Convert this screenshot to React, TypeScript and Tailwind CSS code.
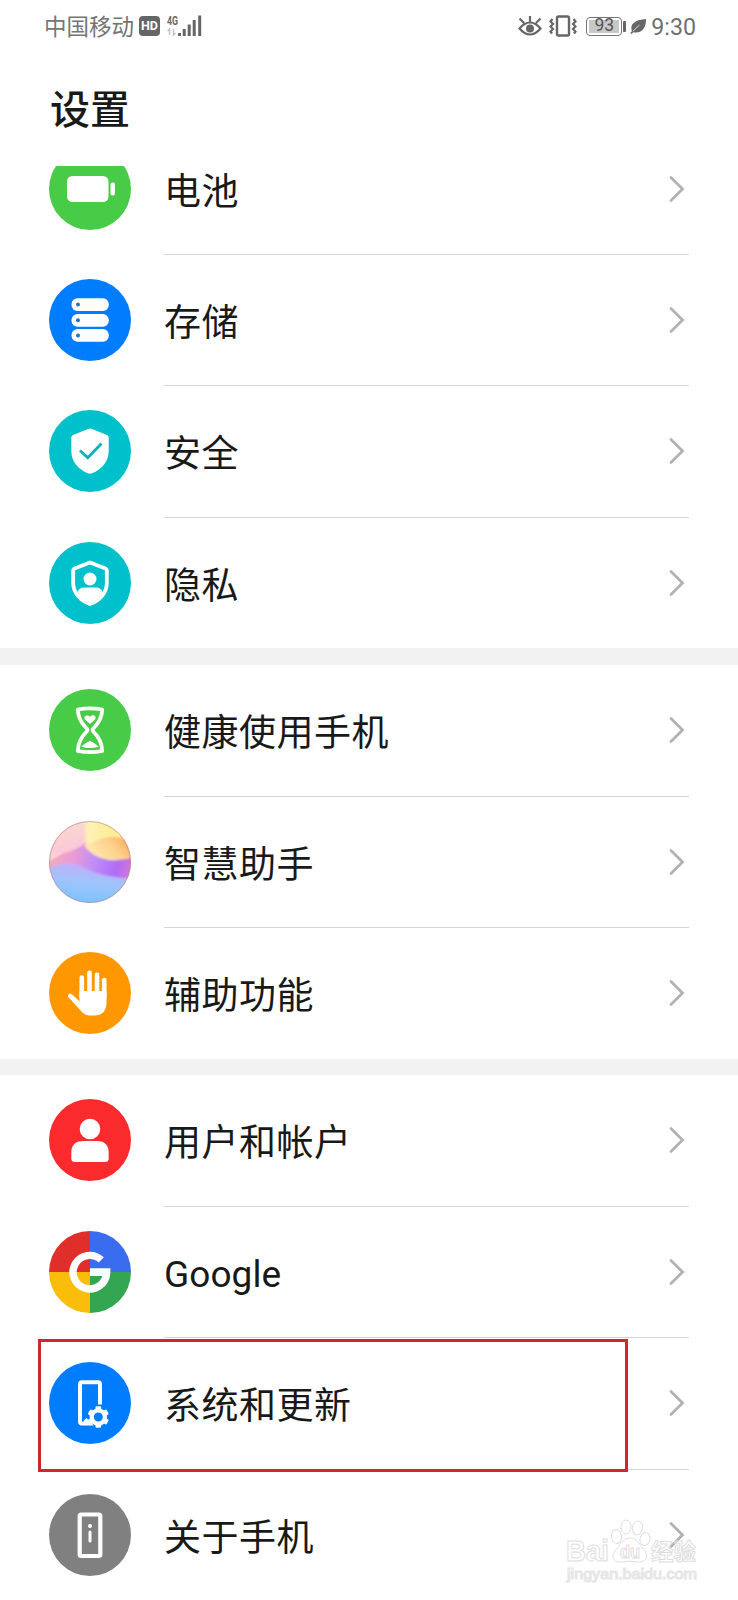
import React from "react";

const disc = "h-[82px] w-[82px] shrink-0";

function BatteryIcon() {
  return (
    <svg viewBox="0 0 82 82" className={disc}>
      <circle cx="41" cy="41" r="41" fill="#48cc48" />
      <rect x="18" y="28" width="41.5" height="26" rx="5.5" fill="#fff" />
      <rect x="61.5" y="34.5" width="4.5" height="13" rx="2" fill="#fff" />
    </svg>
  );
}

function StorageIcon() {
  return (
    <svg viewBox="0 0 82 82" className={disc}>
      <circle cx="41" cy="41" r="41" fill="#007dff" />
      {[19.2, 34.9, 50].map((y) => (
        <g key={y}>
          <rect x="22.5" y={y} width="37.3" height="12.8" rx="6" fill="#fff" />
          <circle cx="29" cy={y + 6.4} r="2" fill="#2a72b8" />
        </g>
      ))}
    </svg>
  );
}

function SecurityIcon() {
  return (
    <svg viewBox="0 0 82 82" className={disc}>
      <circle cx="41" cy="41" r="41" fill="#00c1cb" />
      <path d="M41 18.5Q42 18.5 43 19L58 25Q59.7 25.8 59.7 27.5V41C59.7 51 53 59.5 43 63.3Q41 64.2 39 63.3C29 59.5 22.3 51 22.3 41V27.5Q22.3 25.8 24 25L39 19Q40 18.5 41 18.5Z" fill="#fff" />
      <path d="M31 40.5L38.8 47.7L52.5 33.5" fill="none" stroke="#0eb0ba" strokeWidth="2.8" />
    </svg>
  );
}

function PrivacyIcon() {
  return (
    <svg viewBox="0 0 82 82" className={disc}>
      <circle cx="41" cy="41" r="41" fill="#00c1cb" />
      <path d="M41 20.5L56.5 26.5Q57.8 27 57.8 28.5V41C57.8 50.5 51 58.5 41 62C31 58.5 24.2 50.5 24.2 41V28.5Q24.2 27 25.5 26.5Z" fill="none" stroke="#fff" strokeWidth="3.8" strokeLinejoin="round" />
      <circle cx="41" cy="37" r="6.5" fill="#fff" />
      <path d="M28.5 50Q30 45.5 35 45.5H47Q52 45.5 53.5 50Q49 59 41 62Q33 59 28.5 50Z" fill="#fff" />
    </svg>
  );
}

function HourglassIcon() {
  return (
    <svg viewBox="0 0 82 82" className={disc}>
      <circle cx="41" cy="41" r="41" fill="#48cc48" />
      <path d="M28.8 20.5Q41 18.2 53.2 20.5Q53 31 44.300 39.500Q43 41 44.300 42.500Q53 51 53.200 62Q41 64.400 28.800 62Q29 51 37.700 42.500Q39 41 37.700 39.500Q29 31 28.800 20.500Z" fill="none" stroke="#fff" strokeWidth="3.8" strokeLinejoin="round" />
      <path d="M41 35L35.800 30.300C34 27 38.500 25 41 27.800C43.500 24.500 48 26.500 46.200 30.300Z" fill="#fff" />
      <path d="M32 57.800Q36 54 41 51.700Q46 54 50 57.800Q41 60.200 32 57.800Z" fill="#fff" />
    </svg>
  );
}

function AssistantIcon() {
  return (
    <svg viewBox="0 0 82 82" className={disc}>
      <defs>
        <clipPath id="orb"><circle cx="41" cy="41" r="41" /></clipPath>
        <filter id="orbSoft"><feGaussianBlur stdDeviation="1" /></filter>
        <linearGradient id="orbTop" x1="0" y1="0" x2="1" y2="0">
          <stop offset="0.3" stopColor="#fbd3cf" /><stop offset="0.5" stopColor="#fdf2b4" /><stop offset="0.8" stopColor="#fdec92" />
        </linearGradient>
        <linearGradient id="orbPink" x1="0.3" y1="0" x2="0.6" y2="1">
          <stop offset="0" stopColor="#fbdccb" /><stop offset="1" stopColor="#fcc6da" />
        </linearGradient>
        <linearGradient id="orbOrange" x1="0" y1="0.4" x2="1" y2="0">
          <stop offset="0" stopColor="#fee9ae" /><stop offset="0.5" stopColor="#fdd08c" /><stop offset="0.8" stopColor="#fbae62" />
        </linearGradient>
        <linearGradient id="orbPurple" x1="0" y1="0" x2="1" y2="0.1">
          <stop offset="0.05" stopColor="#f7aebb" /><stop offset="0.35" stopColor="#e99bd4" /><stop offset="0.6" stopColor="#be8cf8" /><stop offset="0.85" stopColor="#ae6cf8" /><stop offset="1" stopColor="#d274d8" />
        </linearGradient>
        <linearGradient id="orbBlue" x1="0.6" y1="0" x2="0.4" y2="1">
          <stop offset="0" stopColor="#c8abf8" /><stop offset="0.45" stopColor="#9fc4fc" /><stop offset="1" stopColor="#74c2fd" />
        </linearGradient>
      </defs>
      <g clipPath="url(#orb)">
        <rect width="82" height="82" fill="url(#orbTop)" />
        <g filter="url(#orbSoft)">
          <path d="M-4 20Q10 0 35 0Q37 20 34 32H-4Z" fill="url(#orbPink)" />
          <path d="M-4 42Q6 38 14 32Q26 30 36 22Q60 34 86 32V62H-4Z" fill="url(#orbPurple)" />
          <path d="M35 24Q45 21 54 17Q70 13 86 24V36Q74 40 60 39Q42 36 35 24Z" fill="url(#orbOrange)" />
          <path d="M-4 50Q16 37 32 45Q54 58 86 57V86H-4Z" fill="url(#orbBlue)" />
        </g>
      </g>
      <circle cx="41" cy="41" r="40.500" fill="none" stroke="#b88a96" strokeOpacity="0.65" />
    </svg>
  );
}

function HandIcon() {
  return (
    <svg viewBox="0 0 82 82" className={disc}>
      <circle cx="41" cy="41" r="41" fill="#ff9800" />
      <g stroke="#fff" strokeWidth="4.600" strokeLinecap="round">
        <path d="M32.800 25.500V46M40.500 20.800V46M48 22.800V46M55.200 28V46" />
        <path d="M21.300 44L31 53" />
      </g>
      <path d="M30.500 39H57.500V50Q57.500 63.500 45 63.500H41Q36 63.500 32 59L23 49L30.500 49.500Z" fill="#fff" />
    </svg>
  );
}

function UserIcon() {
  return (
    <svg viewBox="0 0 82 82" className={disc}>
      <circle cx="41" cy="41" r="41" fill="#fa2a2d" />
      <circle cx="41" cy="30" r="10.300" fill="#fff" />
      <path d="M22.300 54Q22.300 42 34 42H48Q59.700 42 59.700 54V59.500Q59.700 63 56 63H26Q22.300 63 22.300 59.500Z" fill="#fff" />
    </svg>
  );
}

function GoogleIcon() {
  return (
    <svg viewBox="0 0 82 82" className={disc}>
      <path d="M41 41V0A41 41 0 0 0 0 41Z" fill="#e02f2b" />
      <path d="M41 41H82A41 41 0 0 0 41 0Z" fill="#3a6cf0" />
      <path d="M41 41H0A41 41 0 0 0 41 82Z" fill="#fabd09" />
      <path d="M41 41V82A41 41 0 0 0 82 41Z" fill="#34a551" />
      <path d="M52.300 28.900A16.800 16.800 0 1 0 57.600 42" fill="none" stroke="#fff" strokeWidth="7.400" />
      <path d="M41 37.300H61.400V42L54 45H41Z" fill="#fff" />
    </svg>
  );
}

function SystemIcon() {
  return (
    <svg viewBox="0 0 82 82" className={disc}>
      <circle cx="41" cy="41" r="41" fill="#007dff" />
      <path d="M51 42.500V22.500Q51 20.300 49 20.300H33Q31 20.300 31 22.500V59.500Q31 61.500 33 61.500H40L36 57.500" fill="none" stroke="#fff" strokeWidth="4" />
      <circle cx="49.300" cy="55" r="6.600" fill="none" stroke="#fff" strokeWidth="4.200" />
      {[0, 60, 120, 180, 240, 300].map((a) => (
        <rect key={a} x="46.500" y="44.300" width="5.600" height="4.500" rx="1.200" fill="#fff" transform={`rotate(${a} 49.300 55)`} />
      ))}
    </svg>
  );
}

function AboutIcon() {
  return (
    <svg viewBox="0 0 82 82" className={disc}>
      <circle cx="41" cy="41" r="41" fill="#808080" />
      <rect x="30.700" y="20.500" width="20.600" height="41.500" rx="1.500" fill="none" stroke="#fff" strokeWidth="4.200" />
      <circle cx="41" cy="32" r="2" fill="#fff" />
      <path d="M41 38V47" stroke="#fff" strokeWidth="3" strokeLinecap="round" />
    </svg>
  );
}

function Chevron() {
  return (
    <svg viewBox="0 0 16 28" className="mt-[27px] h-7 w-4 shrink-0">
      <path d="M2 2.500L13.500 14L2 25.500" fill="none" stroke="#b2b2b2" strokeWidth="2.800" strokeLinecap="round" />
    </svg>
  );
}

type Item = { label: string; icon: React.ReactNode; height: string; latin?: boolean };

const groups: Item[][] = [
  [
    { label: "电池", icon: <BatteryIcon />, height: "h-[131px] -mt-[42px]" },
    { label: "存储", icon: <StorageIcon />, height: "h-[131px]" },
    { label: "安全", icon: <SecurityIcon />, height: "h-[132px]" },
    { label: "隐私", icon: <PrivacyIcon />, height: "h-[130px]" },
  ],
  [
    { label: "健康使用手机", icon: <HourglassIcon />, height: "h-[132px]" },
    { label: "智慧助手", icon: <AssistantIcon />, height: "h-[131px]" },
    { label: "辅助功能", icon: <HandIcon />, height: "h-[131px]" },
  ],
  [
    { label: "用户和帐户", icon: <UserIcon />, height: "h-[132px]" },
    { label: "Google", icon: <GoogleIcon />, height: "h-[131px]", latin: true },
    { label: "系统和更新", icon: <SystemIcon />, height: "h-[132px]" },
    { label: "关于手机", icon: <AboutIcon />, height: "h-[130px]" },
  ],
];

function Row({ item, divider }: { item: Item; divider: boolean }) {
  return (
    <div className={`flex pr-[49px] pl-[49px] ${item.height}`}>
      <div className="pt-6">{item.icon}</div>
      <div className={`ml-[33px] flex flex-1 items-start justify-between pt-6 pr-[4px] ${divider ? "border-b border-[#d5d5d5]" : ""}`}>
        <span className={`text-[37px] leading-[54px] whitespace-nowrap text-[#191919] ${item.latin ? "mt-[17px] tracking-[0.05px]" : "mt-[18px] tracking-[0.5px]"}`}>{item.label}</span>
        <Chevron />
      </div>
    </div>
  );
}

function StatusBar() {
  return (
    <div className="flex h-[52px] items-center pr-[42px] pl-[44px] text-[#666]">
      <span className="mt-[2px] text-[22.500px] leading-[30px] font-normal whitespace-nowrap text-[#757575]">中国移动</span>
      <span className="ml-[5px] flex h-[20px] w-[21px] items-center justify-center rounded-[4px] bg-[#666] text-[12.500px] font-bold text-white">HD</span>
      <svg viewBox="0 0 36 24" className="ml-[7px] h-6 w-9">
        <text x="0" y="10.500" fontSize="12.500" fontWeight="700" fill="#666" textLength="11" lengthAdjust="spacingAndGlyphs">4G</text>
        <path d="M2.500 21V15L0.500 17M6.500 15V21L8.500 19" fill="none" stroke="#c4c4c4" strokeWidth="1.500" />
        <path d="M12.500 22V19M17.200 22V15M22.200 22V10.500M27.200 22V6M32.700 22V1.500" stroke="#666" strokeWidth="3" />
      </svg>
      <div className="ml-auto flex items-center">
        <svg viewBox="0 0 24 22" className="h-[22px] w-6">
          <path d="M1.500 13.500Q6.500 7.500 12 7.500Q17.500 7.500 22.500 13.500Q17.500 19.500 12 19.500Q6.500 19.500 1.500 13.500ZM12 7V1M6 8L1.500 3.500M18 8L22.500 3.500" fill="none" stroke="#666" strokeWidth="2.200" />
          <circle cx="12" cy="13.500" r="4" fill="#666" />
        </svg>
        <svg viewBox="0 0 28 22" className="ml-[7px] h-[22px] w-7">
          <rect x="8" y="1.500" width="12" height="19" rx="1.500" fill="none" stroke="#666" strokeWidth="2.400" />
          <path d="M3.500 4L1.500 6.500L4 9L1.500 11.500L4 14L1.500 16.500L3 18.500M24.500 4L26.500 6.500L24 9L26.500 11.500L24 14L26.500 16.500L25 18.500" fill="none" stroke="#666" strokeWidth="2.200" />
        </svg>
        <span className="ml-[9px] flex h-[19px] w-[36px] items-center justify-center rounded-[4px] border border-[#777] p-[2px]">
          <span className="flex h-full w-full items-center justify-center bg-[#c8c8c8] font-[Roboto] text-[17.500px] leading-none text-[#555]">93</span>
        </span>
        <span className="ml-[1px] h-[11px] w-[3px] rounded-[1px] bg-[#666]" />
        <svg viewBox="0 0 18 17" className="ml-[4px] h-[17px] w-[17px]">
          <path d="M17 0.500C17 10 13 16 3.500 14.500L1.500 16.500L0.300 15.500L2 13.500C-0.500 6 5 1.500 17 0.500Z" fill="#666" />
          <path d="M3 13.500L10 7" stroke="#fff" strokeWidth="0.800" />
        </svg>
        <span className="mt-[1px] ml-[4px] font-[Roboto] text-[23.200px] leading-[30px] font-normal text-[#6f6f6f]">9:30</span>
      </div>
    </div>
  );
}

function Watermark() {
  return (
    <svg viewBox="0 0 140 70" className="absolute top-[1516px] left-[564px] h-[70px] w-[140px]">
      <g fill="#fff" fillOpacity="0.850" stroke="#dedede" strokeWidth="1">
        <text x="2" y="45" fontSize="29" fontWeight="700" fontFamily="Liberation Sans" textLength="43" lengthAdjust="spacingAndGlyphs">Bai</text>
        <ellipse cx="52.500" cy="20.500" rx="5" ry="7" transform="rotate(-10 52.500 20.500)" />
        <ellipse cx="62" cy="11" rx="5" ry="7" />
        <ellipse cx="73.500" cy="12" rx="5" ry="7" transform="rotate(10 73.500 12)" />
        <ellipse cx="81" cy="23" rx="5" ry="6.500" transform="rotate(15 81 23)" />
        <path d="M66 22C73 22 76 29 81 35C86 42 80 47 73 46Q66 44.500 59 46C51 47 46 42 51 35C56 29 59 22 66 22Z" />
        <text x="56" y="42" fontSize="18" fontFamily="Liberation Sans" fontWeight="700" textLength="20" lengthAdjust="spacingAndGlyphs">du</text>
        <text x="87" y="43.500" fontSize="22.500" fontWeight="700" fillOpacity="0.300" textLength="45">经验</text>
        <text x="3" y="63" fontSize="15" fontFamily="Liberation Sans" fontWeight="400" stroke="#e6e6e6" strokeWidth="1.200" textLength="130" lengthAdjust="spacingAndGlyphs">jingyan.baidu.com</text>
      </g>
    </svg>
  );
}

export default function App() {
  return (
    <main className="relative h-[1600px] w-[738px] overflow-hidden bg-white font-['Roboto','Noto_Sans_CJK_SC',sans-serif]">
      <StatusBar />
      <header className="h-[114px] pt-[30px] pl-[50px]">
        <h1 className="text-[40px] leading-[58px] font-medium text-[#191919]">设置</h1>
      </header>
      <div className="flex h-[1434px] flex-col overflow-hidden">
        {groups.map((items, g) => (
          <section key={g} className={g === 0 ? "" : g === 1 ? "border-t-[17px] border-[#f2f2f2]" : "border-t-[16px] border-[#f2f2f2]"}>
            {items.map((item, i) => (
              <Row key={item.label} item={item} divider={i < items.length - 1} />
            ))}
          </section>
        ))}
      </div>
      <div className="absolute top-[1339px] left-[38px] h-[133px] w-[590px] border-[3px] border-[#d0272f]" />
      <Watermark />
    </main>
  );
}
